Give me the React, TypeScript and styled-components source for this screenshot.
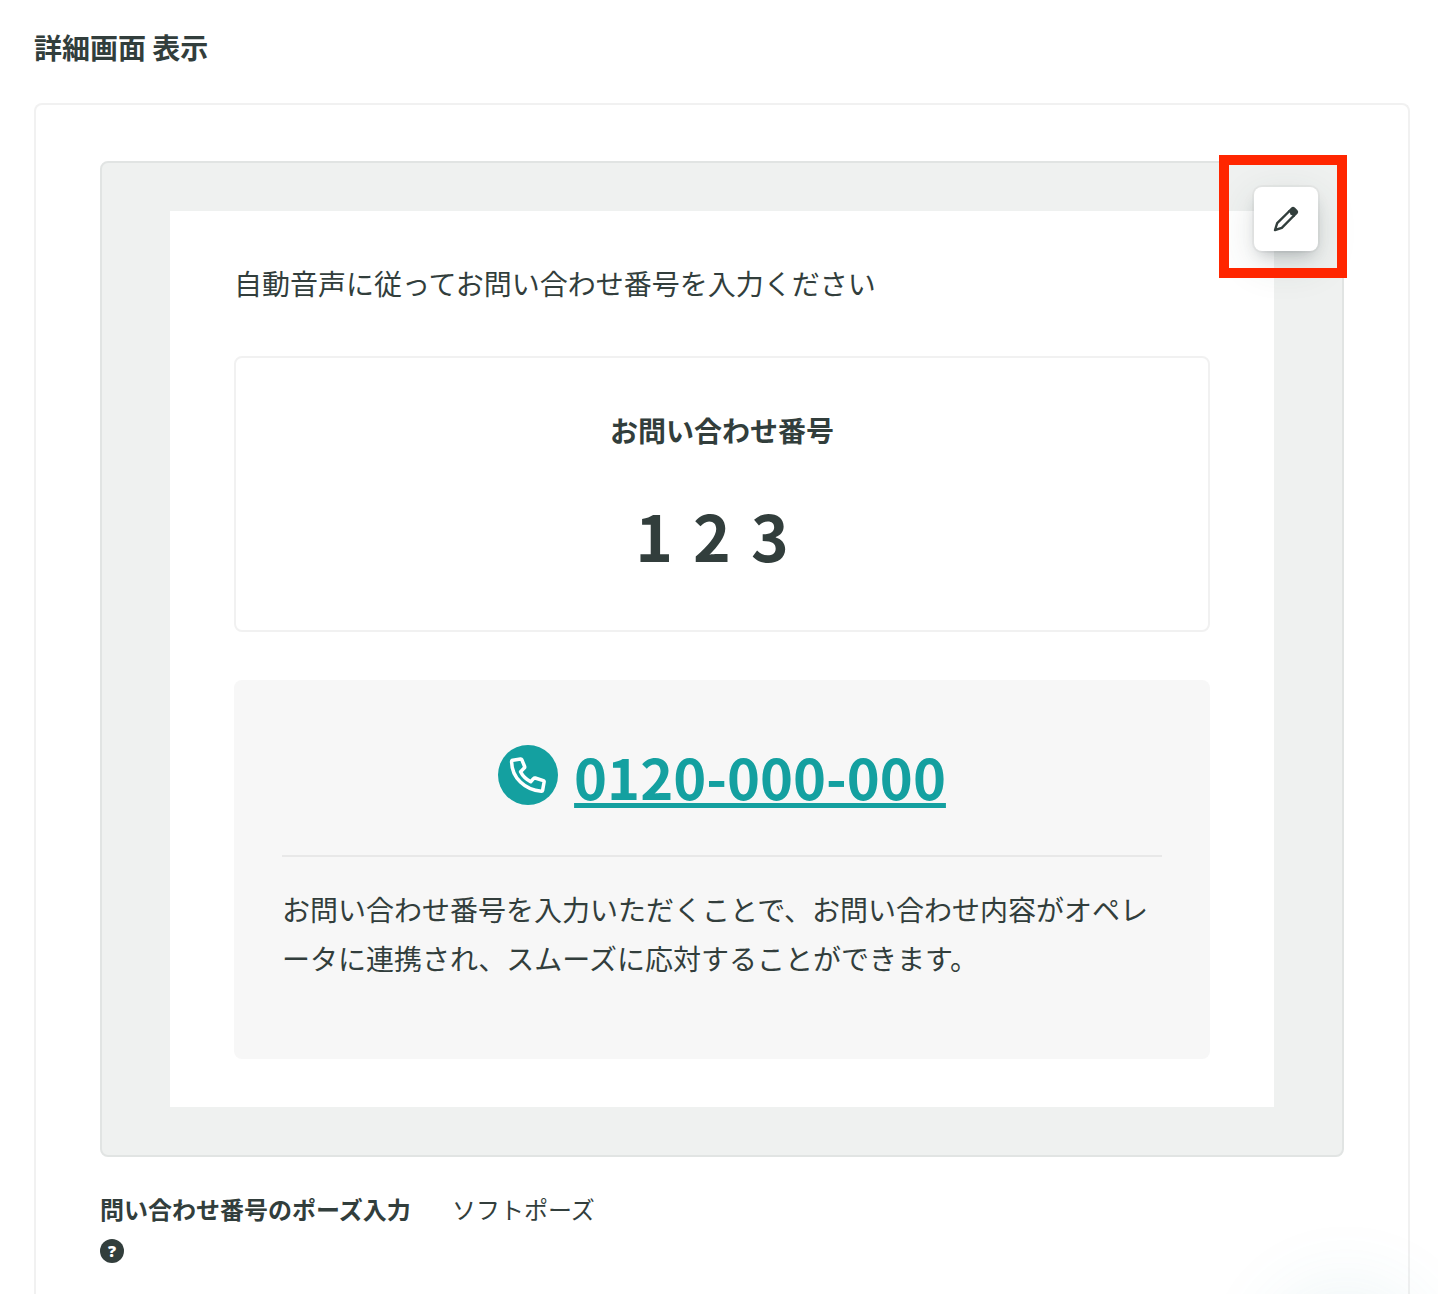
import React from "react";
import styled, { createGlobalStyle } from "styled-components";

const ink = "#323e3c";
const teal = "#14a0a0";

const GlobalStyle = createGlobalStyle`
  *, *::before, *::after { box-sizing: border-box; }
  body {
    margin: 0;
    background: #fff;
    color: ${ink};
    font-family: "Noto Sans CJK JP", "Noto Sans", sans-serif;
    font-size: 28px;
    line-height: 48px;
  }
  h1, h2, p, dl, dd { margin: 0; }
`;

const Page = styled.main`
  display: flex;
  flex-direction: column;
  height: 100vh;
  overflow: hidden;
  padding: 23px 28px 0 34px;
  gap: 32px;
`;

const Heading = styled.h1`
  font-size: 28px;
  font-weight: 700;
  line-height: 48px;
`;

const Panel = styled.section`
  flex: 1;
  padding: 56px 64px 0;
  border: 2px solid #f1f1f1;
  border-bottom: 0;
  border-radius: 8px 8px 0 0;
`;

const Frame = styled.div`
  position: relative;
  padding: 48px 68px;
  border: 2px solid #e1e4e3;
  border-radius: 8px;
  background: #eff1f0;
`;

const Sheet = styled.article`
  display: flex;
  flex-direction: column;
  gap: 48px;
  padding: 48px 64px;
  background: #fff;
`;

const Lead = styled.p`
  line-height: 49px;
`;

const NumberCard = styled.section`
  display: flex;
  flex-direction: column;
  align-items: center;
  gap: 32px;
  padding: 48px;
  border: 2px solid #f1f1f1;
  border-radius: 8px;
`;

const NumberTitle = styled.h2`
  font-size: 28px;
  line-height: 48px;
`;

const NumberValue = styled.p`
  font-size: 64px;
  font-weight: 700;
  line-height: 96px;
  letter-spacing: 20px;
`;

const PhoneCard = styled.section`
  padding: 48px;
  border-radius: 8px;
  background: #f7f7f7;
`;

const PhoneRow = styled.div`
  display: flex;
  justify-content: center;
  align-items: center;
  gap: 16px;
`;

const PhoneLink = styled.a`
  color: ${teal};
  font-size: 56px;
  font-weight: 700;
  line-height: 96px;
  text-decoration-thickness: 5px;
  text-decoration-skip-ink: none;
`;

const Note = styled.p`
  margin-top: 31px;
  padding: 28px 0;
  border-top: 2px solid #e8e8e8;
  line-height: 49px;
  word-break: break-all;
  line-break: anywhere;
`;

const EditButton = styled.button`
  position: absolute;
  top: 24px;
  right: 24px;
  display: grid;
  place-items: center;
  width: 64px;
  height: 64px;
  padding: 0;
  border: 0;
  border-radius: 8px;
  background: #fff;
  color: ${ink};
  box-shadow: 0 0 0 2px rgba(51, 62, 60, 0.04), 0 8px 16px -6px rgba(30, 40, 50, 0.28),
    0 12px 40px rgba(51, 70, 66, 0.14);
`;

const Highlight = styled.div`
  position: absolute;
  top: -8px;
  right: -5px;
  width: 128px;
  height: 123px;
  border: 10px solid #ff2600;
  pointer-events: none;
`;

const Settings = styled.dl`
  display: grid;
  grid-template-columns: 320px 1fr;
  column-gap: 32px;
  margin-top: 32px;
  font-size: 24px;
  line-height: 40px;
`;

const Term = styled.dt`
  display: flex;
  flex-wrap: wrap;
  align-items: center;
  gap: 10px 8px;
  font-weight: 700;
`;

const HelpButton = styled.button`
  display: grid;
  place-items: center;
  width: 24px;
  height: 24px;
  padding: 0;
  border: 0;
  border-radius: 50%;
  background: ${ink};
  color: #fff;
  font: 800 16px/24px "Open Sans", "Noto Sans", sans-serif;
`;

const ChatGlow = styled.div`
  position: fixed;
  right: 32px;
  bottom: -130px;
  width: 120px;
  height: 120px;
  border-radius: 50%;
  box-shadow: 0 0 80px 16px rgba(60, 150, 160, 0.1);
  pointer-events: none;
`;

const PencilIcon = () => (
  <svg width="26" height="26" viewBox="0 0 26 26" fill="none" aria-hidden="true">
    <path
      d="M17 4.500 4.200 17.200 2 24l6.800-2.200L21.500 9"
      stroke="currentColor"
      strokeWidth="2.400"
      strokeLinejoin="round"
    />
    <path
      d="M14.500 5.500 18.300 1.500Q20 .1 21.800 1.500L24.500 4.200Q26 6 24.500 7.700L20.500 11.500Q20.800 9.800 18.800 9.200 16.800 8.800 17 7 16.500 5.500 14.500 5.500Z"
      fill="currentColor"
    />
  </svg>
);

const PhoneIcon = () => (
  <svg width="60" height="60" viewBox="0 1 60 60" overflow="visible" fill="none" aria-hidden="true">
    <circle cx="30" cy="30" r="30" fill={teal} />
    <path
      d="M14.800 15.200 22.500 14Q23.500 13.900 23.900 14.800L26.600 21.500Q27 22.500 26.200 23.100L22.600 26.700Q25.500 32.800 32.700 36.700L35.700 33.400Q36.300 32.700 37.200 33L45.400 35.600Q46.300 36 46.100 37L44.600 45.400Q44.400 46.400 43.300 46.300C27 45 13.800 33 13.600 16.600Q13.600 15.400 14.800 15.200Z"
      stroke="#fff"
      strokeWidth="3.500"
      strokeLinejoin="round"
    />
  </svg>
);

export default function App() {
  return (
    <>
      <GlobalStyle />
      <Page lang="ja">
        <Heading>詳細画面 表示</Heading>
        <Panel>
          <Frame>
            <Sheet>
              <Lead>自動音声に従ってお問い合わせ番号を入力ください</Lead>
              <NumberCard>
                <NumberTitle>お問い合わせ番号</NumberTitle>
                <NumberValue>123</NumberValue>
              </NumberCard>
              <PhoneCard>
                <PhoneRow>
                  <PhoneIcon />
                  <PhoneLink href="tel:0120000000">0120-000-000</PhoneLink>
                </PhoneRow>
                <Note>
                  お問い合わせ番号を入力いただくことで、お問い合わせ内容がオペレータに連携され、スムーズに応対することができます。
                </Note>
              </PhoneCard>
            </Sheet>
            <EditButton type="button" aria-label="編集">
              <PencilIcon />
            </EditButton>
            <Highlight />
          </Frame>
          <Settings>
            <Term>
              問い合わせ番号のポーズ入力
              <HelpButton type="button">?</HelpButton>
            </Term>
            <dd>ソフトポーズ</dd>
          </Settings>
        </Panel>
      </Page>
      <ChatGlow />
    </>
  );
}
